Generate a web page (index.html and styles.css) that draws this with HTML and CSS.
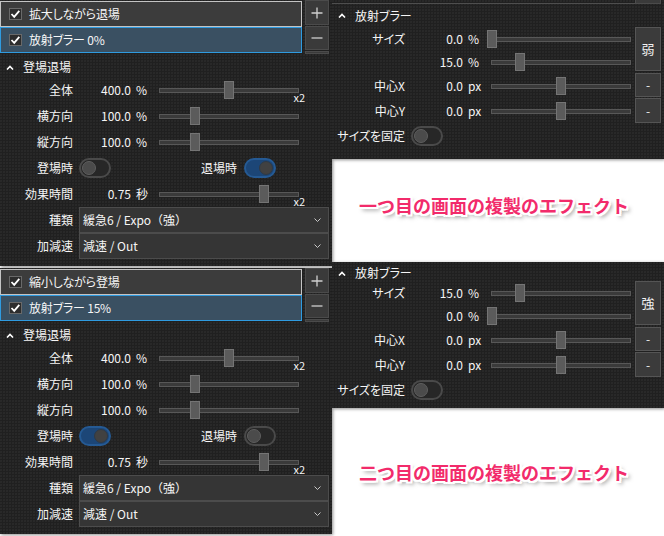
FILE: index.html
```html
<!DOCTYPE html>
<html lang="ja">
<head>
<meta charset="utf-8">
<title>エフェクト</title>
<link rel="stylesheet" href="styles.css">
</head>
<body>
<div class="page">
  <div class="col-left">
    <section class="panel lp">
      <div class="listwrap">
        <div class="list">
          <div class="item"><span class="cb"><svg width="11" height="10" viewBox="0 0 11 10"><polyline points="1.5,5 4.2,7.8 9.3,1.8" fill="none" stroke="#fff" stroke-width="1.8"/></svg></span><span>拡大しながら退場</span></div>
          <div class="item sel"><span class="cb"><svg width="11" height="10" viewBox="0 0 11 10"><polyline points="1.5,5 4.2,7.8 9.3,1.8" fill="none" stroke="#fff" stroke-width="1.8"/></svg></span><span>放射ブラー 0%</span></div>
        </div>
        <div class="btns">
          <div class="btn"><svg width="12" height="12" viewBox="0 0 12 12"><path d="M6 0.5V11.5M0.5 6H11.5" stroke="#d0d0d0" stroke-width="1.3"/></svg></div>
          <div class="btn m"><svg width="12" height="12" viewBox="0 0 12 12"><path d="M0.5 6H11.5" stroke="#d0d0d0" stroke-width="1.3"/></svg></div>
          <div class="btn stub"></div>
        </div>
      </div>
      <div class="hdr"><svg width="8" height="5" viewBox="0 0 8 5"><polyline points="1,4.5 4,1.5 7,4.5" fill="none" stroke="#fff" stroke-width="1.6"/></svg><span>登場退場</span></div>
      <div class="row"><span class="lbl">全体</span><span class="num">400.0</span><span class="unit">%</span><div class="slider"><div class="track"></div><div class="thumb" style="--p:0.5"></div><span class="x2">x2</span></div></div>
      <div class="row"><span class="lbl">横方向</span><span class="num">100.0</span><span class="unit">%</span><div class="slider"><div class="track"></div><div class="thumb" style="--p:0.25"></div></div></div>
      <div class="row"><span class="lbl">縦方向</span><span class="num">100.0</span><span class="unit">%</span><div class="slider"><div class="track"></div><div class="thumb" style="--p:0.25"></div></div></div>
      <div class="trow"><span class="lbl w73">登場時</span><span class="tg"><span class="knob"></span></span><span class="lbl w126">退場時</span><span class="tg on"><span class="knob"></span></span></div>
      <div class="row"><span class="lbl">効果時間</span><span class="num">0.75</span><span class="unit">秒</span><div class="slider"><div class="track"></div><div class="thumb" style="--p:0.75"></div><span class="x2">x2</span></div></div>
      <div class="drow"><span class="lbl w73">種類</span><div class="dd"><span>緩急6 / Expo（強）</span><svg width="7" height="4" viewBox="0 0 7 4"><polyline points="0.5,0.5 3.5,3.5 6.5,0.5" fill="none" stroke="#c8c8c8" stroke-width="1"/></svg></div></div>
      <div class="drow"><span class="lbl w73">加減速</span><div class="dd"><span>減速 / Out</span><svg width="7" height="4" viewBox="0 0 7 4"><polyline points="0.5,0.5 3.5,3.5 6.5,0.5" fill="none" stroke="#c8c8c8" stroke-width="1"/></svg></div></div>
    </section>

    <section class="panel lp">
      <div class="listwrap">
        <div class="list">
          <div class="item"><span class="cb"><svg width="11" height="10" viewBox="0 0 11 10"><polyline points="1.5,5 4.2,7.8 9.3,1.8" fill="none" stroke="#fff" stroke-width="1.8"/></svg></span><span>縮小しながら登場</span></div>
          <div class="item sel"><span class="cb"><svg width="11" height="10" viewBox="0 0 11 10"><polyline points="1.5,5 4.2,7.8 9.3,1.8" fill="none" stroke="#fff" stroke-width="1.8"/></svg></span><span>放射ブラー 15%</span></div>
        </div>
        <div class="btns">
          <div class="btn"><svg width="12" height="12" viewBox="0 0 12 12"><path d="M6 0.5V11.5M0.5 6H11.5" stroke="#d0d0d0" stroke-width="1.3"/></svg></div>
          <div class="btn m"><svg width="12" height="12" viewBox="0 0 12 12"><path d="M0.5 6H11.5" stroke="#d0d0d0" stroke-width="1.3"/></svg></div>
          <div class="btn stub"></div>
        </div>
      </div>
      <div class="hdr"><svg width="8" height="5" viewBox="0 0 8 5"><polyline points="1,4.5 4,1.5 7,4.5" fill="none" stroke="#fff" stroke-width="1.6"/></svg><span>登場退場</span></div>
      <div class="row"><span class="lbl">全体</span><span class="num">400.0</span><span class="unit">%</span><div class="slider"><div class="track"></div><div class="thumb" style="--p:0.5"></div><span class="x2">x2</span></div></div>
      <div class="row"><span class="lbl">横方向</span><span class="num">100.0</span><span class="unit">%</span><div class="slider"><div class="track"></div><div class="thumb" style="--p:0.25"></div></div></div>
      <div class="row"><span class="lbl">縦方向</span><span class="num">100.0</span><span class="unit">%</span><div class="slider"><div class="track"></div><div class="thumb" style="--p:0.25"></div></div></div>
      <div class="trow"><span class="lbl w73">登場時</span><span class="tg on"><span class="knob"></span></span><span class="lbl w126">退場時</span><span class="tg"><span class="knob"></span></span></div>
      <div class="row"><span class="lbl">効果時間</span><span class="num">0.75</span><span class="unit">秒</span><div class="slider"><div class="track"></div><div class="thumb" style="--p:0.75"></div><span class="x2">x2</span></div></div>
      <div class="drow"><span class="lbl w73">種類</span><div class="dd"><span>緩急6 / Expo（強）</span><svg width="7" height="4" viewBox="0 0 7 4"><polyline points="0.5,0.5 3.5,3.5 6.5,0.5" fill="none" stroke="#c8c8c8" stroke-width="1"/></svg></div></div>
      <div class="drow"><span class="lbl w73">加減速</span><div class="dd"><span>減速 / Out</span><svg width="7" height="4" viewBox="0 0 7 4"><polyline points="0.5,0.5 3.5,3.5 6.5,0.5" fill="none" stroke="#c8c8c8" stroke-width="1"/></svg></div></div>
    </section>
  </div>

  <div class="col-right">
    <section class="panel rp rp-top">
      <div class="strip"><div class="strip-line"></div><div class="strip-btn"></div></div>
      <div class="hdr rh1"><svg width="8" height="5" viewBox="0 0 8 5"><polyline points="1,4.5 4,1.5 7,4.5" fill="none" stroke="#fff" stroke-width="1.6"/></svg><span>放射ブラー</span></div>
      <div class="rbody">
        <div class="rrows">
          <div class="row r23"><span class="lbl">サイズ</span><span class="num">0.0</span><span class="unit">%</span><div class="slider"><div class="track"></div><div class="thumb" style="--p:0"></div></div></div>
          <div class="row r23"><span class="lbl"></span><span class="num">15.0</span><span class="unit">%</span><div class="slider"><div class="track"></div><div class="thumb" style="--p:0.2"></div></div></div>
          <div class="row r25"><span class="lbl">中心X</span><span class="num">0.0</span><span class="unit">px</span><div class="slider"><div class="track"></div><div class="thumb" style="--p:0.5"></div></div></div>
          <div class="row r25"><span class="lbl">中心Y</span><span class="num">0.0</span><span class="unit">px</span><div class="slider"><div class="track"></div><div class="thumb" style="--p:0.5"></div></div></div>
          <div class="trow r26"><span class="lbl w73">サイズを固定</span><span class="tg"><span class="knob"></span></span></div>
        </div>
        <div class="rbtns">
          <div class="rbtn big">弱</div>
          <div class="rbtn b2">-</div>
          <div class="rbtn b3">-</div>
        </div>
      </div>
    </section>
    <div class="caption c1">一つ目の画面の複製のエフェクト</div>

    <section class="panel rp rp-bot">
      <div class="hdr rh2"><svg width="8" height="5" viewBox="0 0 8 5"><polyline points="1,4.5 4,1.5 7,4.5" fill="none" stroke="#fff" stroke-width="1.6"/></svg><span>放射ブラー</span></div>
      <div class="rbody">
        <div class="rrows">
          <div class="row r23"><span class="lbl">サイズ</span><span class="num">15.0</span><span class="unit">%</span><div class="slider"><div class="track"></div><div class="thumb" style="--p:0.2"></div></div></div>
          <div class="row r23"><span class="lbl"></span><span class="num">0.0</span><span class="unit">%</span><div class="slider"><div class="track"></div><div class="thumb" style="--p:0"></div></div></div>
          <div class="row r25"><span class="lbl">中心X</span><span class="num">0.0</span><span class="unit">px</span><div class="slider"><div class="track"></div><div class="thumb" style="--p:0.5"></div></div></div>
          <div class="row r25"><span class="lbl">中心Y</span><span class="num">0.0</span><span class="unit">px</span><div class="slider"><div class="track"></div><div class="thumb" style="--p:0.5"></div></div></div>
          <div class="trow r26"><span class="lbl w73">サイズを固定</span><span class="tg"><span class="knob"></span></span></div>
        </div>
        <div class="rbtns">
          <div class="rbtn big">強</div>
          <div class="rbtn b2">-</div>
          <div class="rbtn b3">-</div>
        </div>
      </div>
    </section>
    <div class="caption c2">二つ目の画面の複製のエフェクト</div>
  </div>
</div>
</body>
</html>
```

FILE: styles.css
```css
* { box-sizing: border-box; margin: 0; padding: 0; }

body {
  margin: 0;
  background: #ffffff;
  font-family: "Noto Sans CJK JP", "Noto Sans", sans-serif;
  font-size: 12px;
  line-height: 16px;
  color: #f5f5f5;
  font-feature-settings: "palt";
}

.page {
  display: grid;
  grid-template-columns: 332px 332px;
  width: 664px;
  height: 536px;
  overflow: hidden;
}

.col-left {
  display: flex;
  flex-direction: column;
  gap: 2px;
}

.col-right {
  display: flex;
  flex-direction: column;
}

.panel {
  background-color: #202020;
  background-image: radial-gradient(circle at 1px 1px, #292929 0.7px, transparent 0.9px);
  background-size: 3px 3px;
  box-shadow: 1px 1px 3px rgba(0, 0, 0, 0.45);
}

/* ---------- left panels ---------- */
.lp {
  height: 266px;
  display: flex;
  flex-direction: column;
  flex: none;
}

.listwrap {
  display: flex;
  height: 54px;
}

.list {
  width: 302px;
  margin-top: 1px;
  display: flex;
  flex-direction: column;
}

.item {
  height: 26px;
  display: flex;
  align-items: center;
  gap: 7px;
  padding-left: 8px;
  border: 1px solid #c4c4c4;
  background: #3c3c3c;
  font-size: 12px;
  letter-spacing: -0.2px;
  color: #f6f6f6;
}

.item.sel {
  background: #3a5062;
  border-color: #2f9be0;
}

.cb {
  width: 13px;
  height: 12px;
  background: #2d2d2d;
  border: 1px solid #696969;
  display: flex;
  align-items: center;
  justify-content: center;
}

.btns {
  margin-left: 3px;
  width: 24px;
  display: flex;
  flex-direction: column;
  gap: 1px;
}

.btn {
  height: 25px;
  background: #3a3a3a;
  border: 1px solid #4b4b4b;
  display: flex;
  align-items: center;
  justify-content: center;
}

.btn.m { height: 24px; }
.btn.stub { height: 3px; }

.hdr {
  display: flex;
  align-items: center;
  padding-left: 6px;
  height: 20px;
  margin-top: 3px;
}

.hdr svg { margin-right: 9px; }

.row {
  display: grid;
  grid-template-columns: 73px 58px 24px 148px;
  align-items: center;
  height: 26px;
}

.lbl { text-align: right; white-space: nowrap; }
.num { text-align: right; }
.unit { padding-left: 5px; white-space: nowrap; }

.slider {
  position: relative;
  height: 18px;
}

.track {
  position: absolute;
  left: 4px;
  right: 4px;
  top: 7px;
  height: 5px;
  background: #3a3a3a;
  border: 1px solid #585858;
}

.thumb {
  position: absolute;
  top: 0;
  width: 10px;
  height: 18px;
  background: #5b5b5b;
  border: 1px solid #747474;
  left: calc(var(--p) * (100% - 10px));
}

.x2 {
  position: absolute;
  right: -2px;
  top: 10px;
  font-size: 11px;
  line-height: 12px;
}

.trow {
  display: flex;
  align-items: center;
  height: 26px;
}

.w73 { width: 73px; flex: none; }
.w126 { width: 126px; flex: none; }

.tg {
  position: relative;
  width: 32px;
  height: 20px;
  border-radius: 10px;
  border: 2px solid #4a4a4a;
  background: #272727;
  margin-left: 6px;
  flex: none;
}

.tg + .lbl + .tg { margin-left: 7px; }

.knob {
  position: absolute;
  left: 1px;
  top: 1px;
  width: 14px;
  height: 14px;
  border-radius: 50%;
  background: #4b4b4b;
  border: 1px solid #5e5e5e;
}

.tg.on {
  background: #1c4677;
  border-color: #255a94;
}

.tg.on .knob {
  left: auto;
  right: 1px;
  background: #414141;
  border-color: #2f3a46;
}

.drow {
  display: flex;
  align-items: center;
  height: 26px;
}

.dd {
  margin-left: 6px;
  width: 250px;
  height: 26px;
  background: #353535;
  border: 1px solid #4c4c4c;
  display: flex;
  align-items: center;
  justify-content: space-between;
  padding: 0 7px 0 3px;
  font-feature-settings: normal;
}

.dd svg { margin-top: -1px; }

/* ---------- right panels ---------- */
.rp { flex: none; }

.rp-top {
  height: 159px;
}

.rp-bot {
  height: 146px;
}

.strip {
  display: flex;
  height: 4px;
}

.strip-line {
  width: 303px;
  border-bottom: 1px solid #4e4e4e;
}

.strip-btn {
  width: 26px;
  background: #3a3a3a;
  border: 1px solid #4b4b4b;
  border-top: none;
}

.rh1 {
  height: 23px;
  margin-top: 0;
}

.rh2 {
  height: 19px;
  margin-top: 0;
  padding-top: 3px;
}

.rbody {
  display: flex;
}

.rrows {
  width: 303px;
  display: flex;
  flex-direction: column;
}

.r23 { height: 23px; }
.r25 { height: 25px; }
.r26 { height: 26px; }

.rbtns {
  width: 26px;
  display: flex;
  flex-direction: column;
}

.rbtn {
  background: #3b3b3b;
  border: 1px solid #555555;
  display: flex;
  align-items: center;
  justify-content: center;
  color: #f2f2f2;
}

.rbtn.big { height: 44px; font-size: 13px; }
.rbtn.b2 { height: 24px; margin-top: 2px; }
.rbtn.b3 { height: 25px; margin-top: 1px; }

/* ---------- captions ---------- */
.caption {
  font-feature-settings: normal;
  font-size: 18px;
  font-weight: 700;
  line-height: 20px;
  color: #f22b6b;
  padding-left: 27px;
  white-space: nowrap;
  text-shadow:
    -2px -2px 0 #fff, 2px -2px 0 #fff, -2px 2px 0 #fff, 2px 2px 0 #fff,
    0 -2px 0 #fff, 0 2px 0 #fff, -2px 0 0 #fff, 2px 0 0 #fff,
    3px 3px 4px rgba(0, 0, 0, 0.5);
}

.c1 {
  height: 103px;
  padding-top: 36px;
}

.c2 {
  flex: 1;
  padding-top: 54px;
}
```
